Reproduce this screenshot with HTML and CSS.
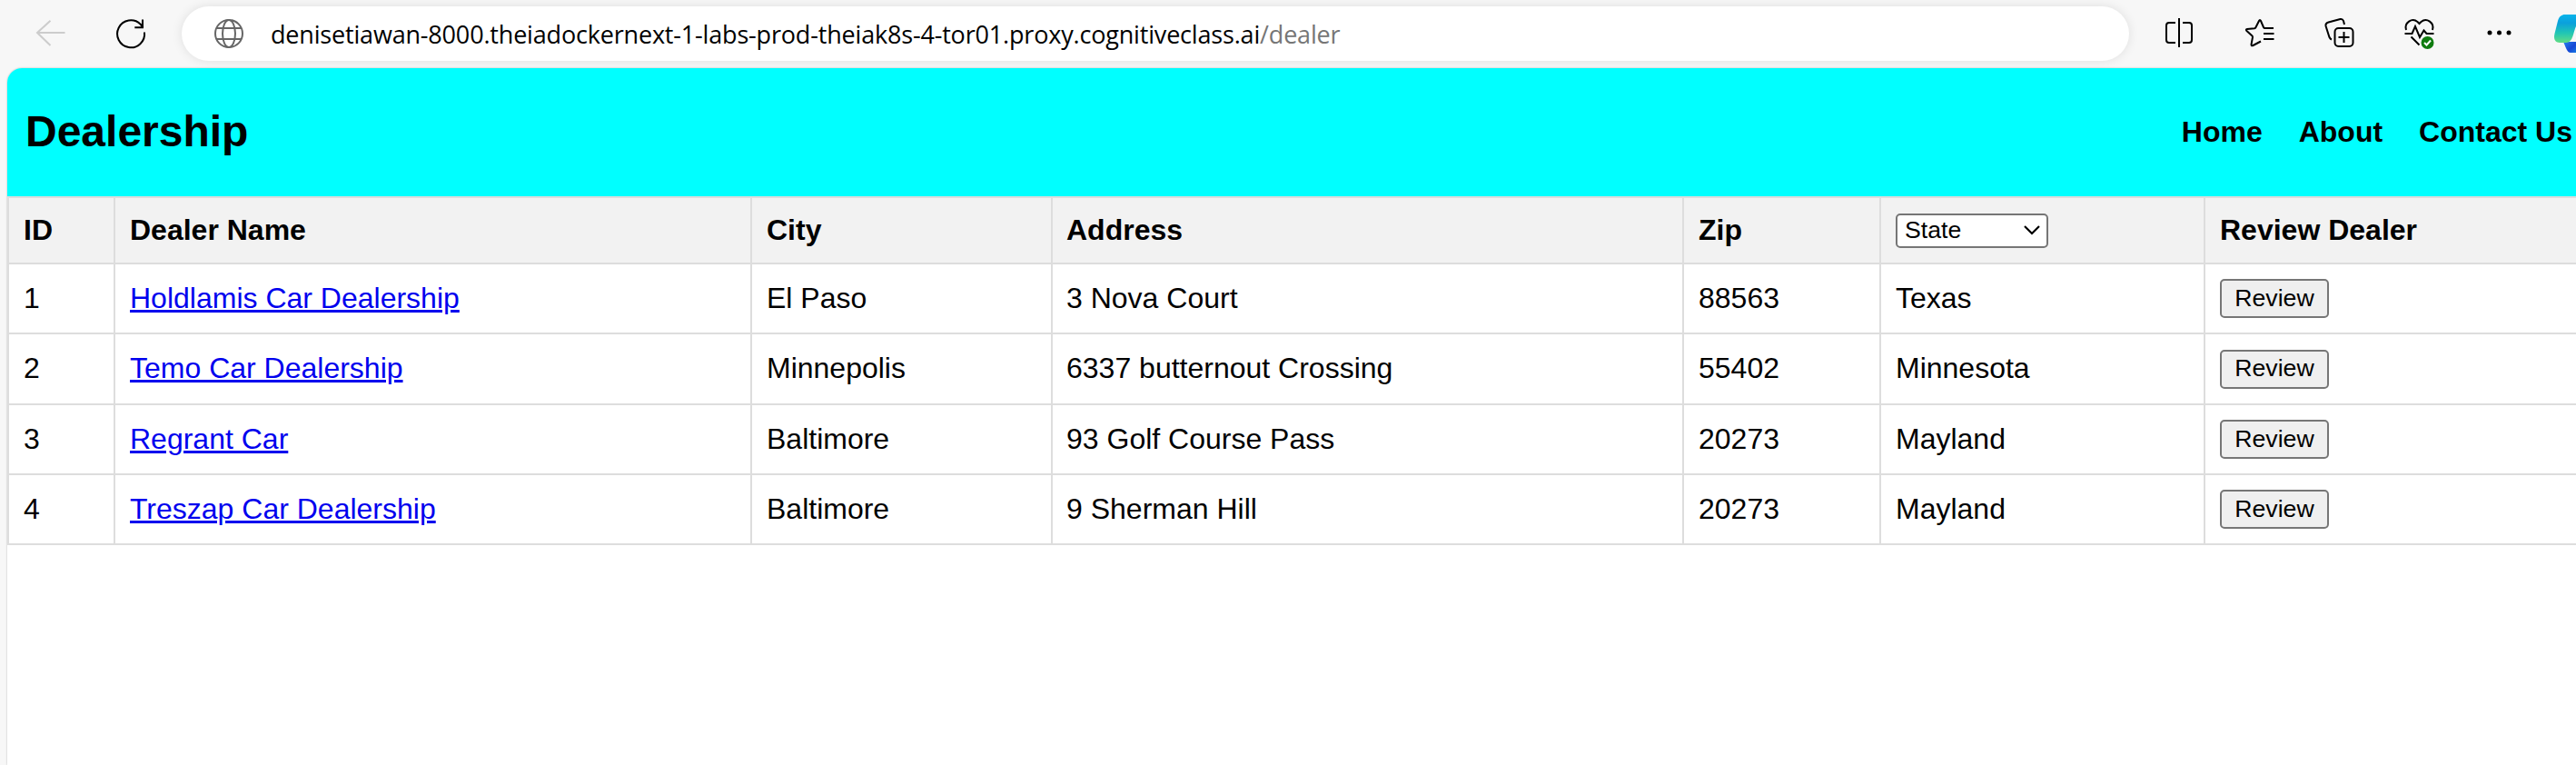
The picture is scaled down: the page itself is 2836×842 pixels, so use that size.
FILE: index.html
```html
<!DOCTYPE html>
<html lang="en">
<head>
<meta charset="utf-8">
<title>Dealership</title>
<link rel="stylesheet" href="styles.css">
</head>
<body>
<header class="toolbar">
  <svg class="icon back" viewBox="0 0 32 32"><path d="M31.5 15H1M15.500 1.700L1 15L15.500 29"/></svg>
  <svg class="icon reload" viewBox="0 0 32 32"><path d="M31 14.500A15 15 0 1 1 26.500 5.500L29.500 9M29 0.500V9.200H20.300"/></svg>
  <div class="address">
    <svg class="icon globe" viewBox="0 0 32 32"><circle cx="16" cy="16" r="15"/><ellipse cx="16" cy="16" rx="7" ry="15"/><path d="M2.500 10H29.500M2.500 22H29.500"/></svg>
    <span class="url">denisetiawan-8000.theiadockernext-1-labs-prod-theiak8s-4-tor01.proxy.cognitiveclass.ai<span class="path">/dealer</span></span>
  </div>
  <div class="actions">
    <svg class="icon" viewBox="0 0 32 32"><path d="M12 5H5Q2 5 2 8V24Q2 27 5 27H12M16 0V32M20 5H27Q30 5 30 8V24Q30 27 27 27H20"/></svg>
    <svg class="icon" viewBox="0 0 32 32"><path d="M32 11H22.500Q21.500 11 21 10L18 3Q17 1 16 3L12.500 10Q12 11 11 11.200L3 12Q1 12.500 2.500 14L8.500 19.500Q9 20 9 21L7.500 29Q7.500 31 9.500 30L18 25.500M21 17H32.500M21 23H32.500"/></svg>
    <svg class="icon" viewBox="0 0 32 32"><rect x="11.500" y="11" width="20" height="20" rx="4"/><path d="M21.500 15V27M15.500 21H27.500M22 7L21 3Q20 .5 17.500 1L4.500 4.500Q1 5.500 1.500 8.500L5.500 21Q6.500 23 8 23.500"/></svg>
    <svg class="icon health" viewBox="0 0 32 34"><path d="M2 13C-.5 5 8.500-1 14.500 4L16.500 6L18.500 4C24.500-1 33.500 5 31 13M.5 17H8.500L12 9L17 21L21.500 13.500L24.500 17H32.500M7.500 20.500L16.500 29.500"/><circle class="badge" cx="25.500" cy="27" r="7"/><path class="tick" d="M22 27L24.500 29.500L29 24.500"/></svg>
    <svg class="icon" viewBox="0 0 32 32"><g class="dots"><circle cx="6" cy="16" r="2.500"/><circle cx="16.500" cy="16" r="2.500"/><circle cx="27" cy="16" r="2.500"/></g></svg>
  </div>
  <svg class="copilot" viewBox="0 0 24 42">
    <defs>
      <linearGradient id="leaf" x1="0" y1="0" x2="0" y2="1"><stop offset="0" stop-color="#08b4ea"/><stop offset=".3" stop-color="#0ba0dc"/><stop offset=".65" stop-color="#20c5b5"/><stop offset="1" stop-color="#62dd84"/></linearGradient>
      <linearGradient id="tail" x1="0" y1="0" x2="1" y2="1"><stop offset="0" stop-color="#2583ee"/><stop offset=".6" stop-color="#1747d4"/><stop offset="1" stop-color="#1678e5"/></linearGradient>
    </defs>
    <path d="M10 30H24V42H18C14 42 13 36 10 30Z" fill="url(#tail)"/>
    <path d="M12 0H24V13C21 19 21 31 13 31H6C1 31-1 27 .5 21L4 7C5.500 2 8 0 12 0Z" fill="url(#leaf)"/>
  </svg>
</header>
<main class="page">
  <nav class="banner">
    <h1>Dealership</h1>
    <div class="links"><a>Home</a><a>About</a><a>Contact Us</a></div>
  </nav>
  <table class="dealers">
    <colgroup><col class="c-id"><col class="c-name"><col class="c-city"><col class="c-address"><col class="c-zip"><col class="c-state"><col class="c-review"></colgroup>
    <thead>
      <tr><th>ID</th><th>Dealer Name</th><th>City</th><th>Address</th><th>Zip</th><th class="control"><div class="select">State<svg viewBox="0 0 18 11"><path d="M1 1L9 9L17 1"/></svg></div></th><th>Review Dealer</th></tr>
    </thead>
    <tbody>
      <tr><td>1</td><td><a href="#">Holdlamis Car Dealership</a></td><td>El Paso</td><td>3 Nova Court</td><td>88563</td><td>Texas</td><td class="control"><button>Review</button></td></tr>
      <tr class="tall"><td>2</td><td><a href="#">Temo Car Dealership</a></td><td>Minnepolis</td><td>6337 butternout Crossing</td><td>55402</td><td>Minnesota</td><td class="control"><button>Review</button></td></tr>
      <tr><td>3</td><td><a href="#">Regrant Car</a></td><td>Baltimore</td><td>93 Golf Course Pass</td><td>20273</td><td>Mayland</td><td class="control"><button>Review</button></td></tr>
      <tr><td>4</td><td><a href="#">Treszap Car Dealership</a></td><td>Baltimore</td><td>9 Sherman Hill</td><td>20273</td><td>Mayland</td><td class="control"><button>Review</button></td></tr>
    </tbody>
  </table>
</main>
</body>
</html>
```
FILE: styles.css
```css
* { box-sizing: border-box; }
body {
  margin: 0;
  height: 842px;
  overflow: hidden;
  background: #f7f7f7;
  color: #000;
  font: 32px/36px "Liberation Sans", Arial, sans-serif;
}
.toolbar {
  display: flex;
  align-items: center;
  height: 75px;
  padding: 0 0 1px 40px;
}
.icon {
  flex: none;
  width: 32px;
  height: 32px;
  fill: none;
  stroke: #000;
  stroke-width: 2;
  stroke-linecap: butt;
  overflow: visible;
}
.back { stroke: #ccc; }
.reload { margin-left: 56px; }
.globe { stroke: #666; }
.address {
  display: flex;
  align-items: center;
  width: 2144px;
  height: 60px;
  margin-left: 40px;
  padding-left: 36px;
  border-radius: 30px;
  background: #fff;
  box-shadow: 0 0 12px rgba(0, 0, 0, .1);
}
.url {
  margin-left: 30px;
  padding-top: 2px;
  font: 27px/40px "Open Sans", "Noto Sans", sans-serif;
  letter-spacing: -.18px;
  white-space: nowrap;
}
.path { color: #767676; }
.actions {
  display: flex;
  gap: 56px;
  margin-left: 39px;
}
.health { height: 34px; }
.icon .badge { fill: #107c10; stroke: none; }
.icon .tick { stroke: #fff; }
.dots { fill: #000; stroke: none; }
.copilot {
  flex: none;
  width: 24px;
  height: 42px;
  margin-left: 45px;
}
.page {
  height: 767px;
  margin-left: 8px;
  overflow: hidden;
  border-top-left-radius: 16px;
  background: #fff;
  box-shadow: 0 0 2px rgba(0, 0, 0, .3);
}
.banner {
  display: flex;
  align-items: center;
  justify-content: space-between;
  height: 141px;
  padding: 0 4px 2px 20px;
  background: #0ff;
  font-weight: bold;
}
.banner h1 { margin: 0; font-size: 48px; line-height: 56px; }
.links { display: flex; gap: 40px; }
.dealers {
  table-layout: fixed;
  width: 2900px;
  border-spacing: 0;
  border-top: 2px solid #ddd;
  border-left: 2px solid #ddd;
}
.c-id { width: 117px; }
.c-name { width: 701px; }
.c-city { width: 331px; }
.c-address { width: 695px; }
.c-zip { width: 217px; }
.c-state { width: 357px; }
th, td {
  height: 77px;
  padding: 0 16px 2px;
  border-right: 2px solid #ddd;
  border-bottom: 2px solid #ddd;
  text-align: left;
  vertical-align: middle;
}
th { height: 73px; background: #f2f2f2; }
.tall td { height: 78px; }
th:nth-child(4), td:nth-child(4) { padding-left: 15px; }
.control { padding-bottom: 0; }
.dealers a { color: #00e; text-decoration-thickness: 3px; }
.select {
  display: flex;
  align-items: center;
  justify-content: space-between;
  width: 168px;
  height: 38px;
  padding: 0 7px 1px 8px;
  border: 2px solid #767676;
  border-radius: 5px;
  background: #fff;
  font-size: 26.667px;
  font-weight: normal;
}
.select svg { width: 18px; height: 11px; fill: none; stroke: #000; stroke-width: 2.2; }
button {
  display: block;
  width: 120px;
  height: 43px;
  padding: 0 0 2px;
  border: 2px solid #767676;
  border-radius: 5px;
  background: #efefef;
  color: #000;
  font: 26.667px/30px "Liberation Sans", Arial, sans-serif;
}
```
